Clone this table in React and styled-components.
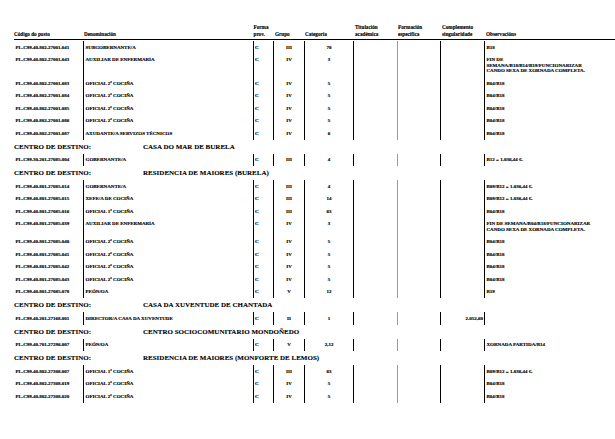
import React from "react";
import styled, { createGlobalStyle } from "styled-components";

const GlobalStyle = createGlobalStyle`
  html, body {
    margin: 0;
    padding: 0;
    background: #ffffff;
  }
  body {
    font-family: "Liberation Serif", "Times New Roman", serif;
    color: #000;
  }
`;

const COLS = "69px 169.5px 20.5px 31px 49px 44px 43px 44px 125px";

const Page = styled.div`
  width: 615px;
  height: 439px;
  box-sizing: border-box;
  padding: 24px 0 0 14px;
  overflow: hidden;
`;

const HeaderRow = styled.div`
  display: grid;
  grid-template-columns: ${COLS};
  align-items: end;
  height: 16px;
  border-bottom: 1.2px solid #000;
  box-sizing: border-box;
  padding-bottom: 1px;
`;

const HeadLabel = styled.div`
  font-size: 5.2px;
  font-weight: 700;
  line-height: 7px;
  white-space: nowrap;
  -webkit-text-stroke: 0.12px #000;
  padding-left: ${({ $pad }) => $pad || 0}px;
`;

const Row = styled.div`
  display: grid;
  grid-template-columns: ${COLS};
  margin-top: ${({ $first }) => ($first ? 1.3 : 0)}px;
`;

const Cell = styled.div`
  font-size: 5px;
  font-weight: 700;
  line-height: 5.5px;
  -webkit-text-stroke: 0.15px #000;
  padding: 3.5px ${({ $align }) => ($align === "right" ? 1 : 0)}px 3.5px
    ${({ $align }) => ($align === "left" ? 1.5 : 0)}px;
  text-align: ${({ $align }) => $align};
  white-space: nowrap;
  border-left: ${({ $line }) =>
    $line === "none" ? "none" : `1px solid ${$line === "grey" ? "#9a9a9a" : "#000"}`};
`;

const CentreBar = styled.div`
  display: flex;
  align-items: center;
  height: 14px;
  font-size: 7px;
  font-weight: 700;
  white-space: nowrap;
  -webkit-text-stroke: 0.1px #000;
`;

const CentreLabel = styled.span`
  width: 129px;
`;

const groups = [
  {
    centre: null,
    rows: [
      ["PL.C99.40.802.27001.041", "SUBGOBERNANTE/A", "C", "III", "70", "", ["B18"]],
      ["PL.C99.40.802.27001.043", "AUXILIAR DE ENFERMARÍA", "C", "IV", "3", "", [
        "FIN DE",
        "SEMANA/B18/B14/B19/FUNCIONARIZAR",
        "CANDO SEXA DE XORNADA COMPLETA.",
      ]],
      ["PL.C99.40.802.27001.083", "OFICIAL 2ª COCIÑA", "C", "IV", "5", "", ["B04/B18"]],
      ["PL.C99.40.802.27001.084", "OFICIAL 2ª COCIÑA", "C", "IV", "5", "", ["B04/B18"]],
      ["PL.C99.40.802.27001.085", "OFICIAL 2ª COCIÑA", "C", "IV", "5", "", ["B04/B18"]],
      ["PL.C99.40.802.27001.086", "OFICIAL 2ª COCIÑA", "C", "IV", "5", "", ["B04/B18"]],
      ["PL.C99.40.802.27001.087", "AXUDANTE/A SERVIZOS TÉCNICOS", "C", "IV", "6", "", ["B04/B18"]],
    ],
  },
  {
    centre: "CASA DO MAR DE BURELA",
    rows: [
      ["PL.C99.30.201.27085.004", "GOBERNANTE/A", "C", "III", "4", "", ["B12 = 1.036,44 €."]],
    ],
  },
  {
    centre: "RESIDENCIA DE MAIORES (BURELA)",
    rows: [
      ["PL.C99.40.801.27085.014", "GOBERNANTE/A", "C", "III", "4", "", ["B09/B12 = 1.036,44 €."]],
      ["PL.C99.40.801.27085.015", "XEFE/A DE COCIÑA", "C", "III", "14", "", ["B09/B12 = 1.036,44 €."]],
      ["PL.C99.40.801.27085.016", "OFICIAL 1ª COCIÑA", "C", "III", "63", "", ["B04/B18"]],
      ["PL.C99.40.801.27085.039", "AUXILIAR DE ENFERMARÍA", "C", "IV", "3", "", [
        "FIN DE SEMANA/B04/B18/FUNCIONARIZAR",
        "CANDO SEXA DE XORNADA COMPLETA.",
      ]],
      ["PL.C99.40.801.27085.040", "OFICIAL 2ª COCIÑA", "C", "IV", "5", "", ["B04/B18"]],
      ["PL.C99.40.801.27085.041", "OFICIAL 2ª COCIÑA", "C", "IV", "5", "", ["B04/B18"]],
      ["PL.C99.40.801.27085.042", "OFICIAL 2ª COCIÑA", "C", "IV", "5", "", ["B04/B18"]],
      ["PL.C99.40.801.27085.043", "OFICIAL 2ª COCIÑA", "C", "IV", "5", "", ["B04/B18"]],
      ["PL.C99.40.801.27085.078", "PEÓN/OA", "C", "V", "12", "", ["B19"]],
    ],
  },
  {
    centre: "CASA DA XUVENTUDE DE CHANTADA",
    rows: [
      ["PL.C99.40.201.27168.001", "DIRECTOR/A CASA DA XUVENTUDE", "C", "II", "1", "2.052,60", []],
    ],
  },
  {
    centre: "CENTRO SOCIOCOMUNITARIO MONDOÑEDO",
    rows: [
      ["PL.C99.40.701.27296.007", "PEÓN/OA", "C", "V", "2,12", "", ["XORNADA PARTIDA/B14"]],
    ],
  },
  {
    centre: "RESIDENCIA DE MAIORES (MONFORTE DE LEMOS)",
    rows: [
      ["PL.C99.40.802.27308.007", "OFICIAL 1ª COCIÑA", "C", "III", "63", "", ["B09/B12 = 1.036,44 €."]],
      ["PL.C99.40.802.27308.019", "OFICIAL 2ª COCIÑA", "C", "IV", "5", "", ["B04/B18"]],
      ["PL.C99.40.802.27308.020", "OFICIAL 2ª COCIÑA", "C", "IV", "5", "", ["B04/B18"]],
    ],
  },
];

const PostRow = ({ row, first }) => {
  const [code, name, forma, grupo, cat, comp, obs] = row;
  return (
    <Row $first={first}>
      <Cell $align="left" $line="none">{code}</Cell>
      <Cell $align="left">{name}</Cell>
      <Cell $align="left">{forma}</Cell>
      <Cell $align="center">{grupo}</Cell>
      <Cell $align="center">{cat}</Cell>
      <Cell $align="left" />
      <Cell $align="left" $line="grey" />
      <Cell $align="right">{comp}</Cell>
      <Cell $align="left">
        {obs.map((l, i) => (
          <div key={i}>{l}</div>
        ))}
      </Cell>
    </Row>
  );
};

export default function App() {
  return (
    <Page>
      <GlobalStyle />
      <HeaderRow>
        <HeadLabel>Código do posto</HeadLabel>
        <HeadLabel $pad={1}>Denominación</HeadLabel>
        <HeadLabel $pad={1}>Forma<br />prov.</HeadLabel>
        <HeadLabel $pad={2}>Grupo</HeadLabel>
        <HeadLabel $pad={1}>Categoría</HeadLabel>
        <HeadLabel $pad={2}>Titulación<br />académica</HeadLabel>
        <HeadLabel $pad={1}>Formación<br />específica</HeadLabel>
        <HeadLabel $pad={2}>Complemento<br />singularidade</HeadLabel>
        <HeadLabel $pad={2}>Observacións</HeadLabel>
      </HeaderRow>
      {groups.map((g, gi) => (
        <React.Fragment key={gi}>
          {g.centre && (
            <CentreBar>
              <CentreLabel>CENTRO DE DESTINO:</CentreLabel>
              <span>{g.centre}</span>
            </CentreBar>
          )}
          {g.rows.map((r, ri) => (
            <PostRow key={ri} row={r} first={gi === 0 && ri === 0} />
          ))}
        </React.Fragment>
      ))}
    </Page>
  );
}
